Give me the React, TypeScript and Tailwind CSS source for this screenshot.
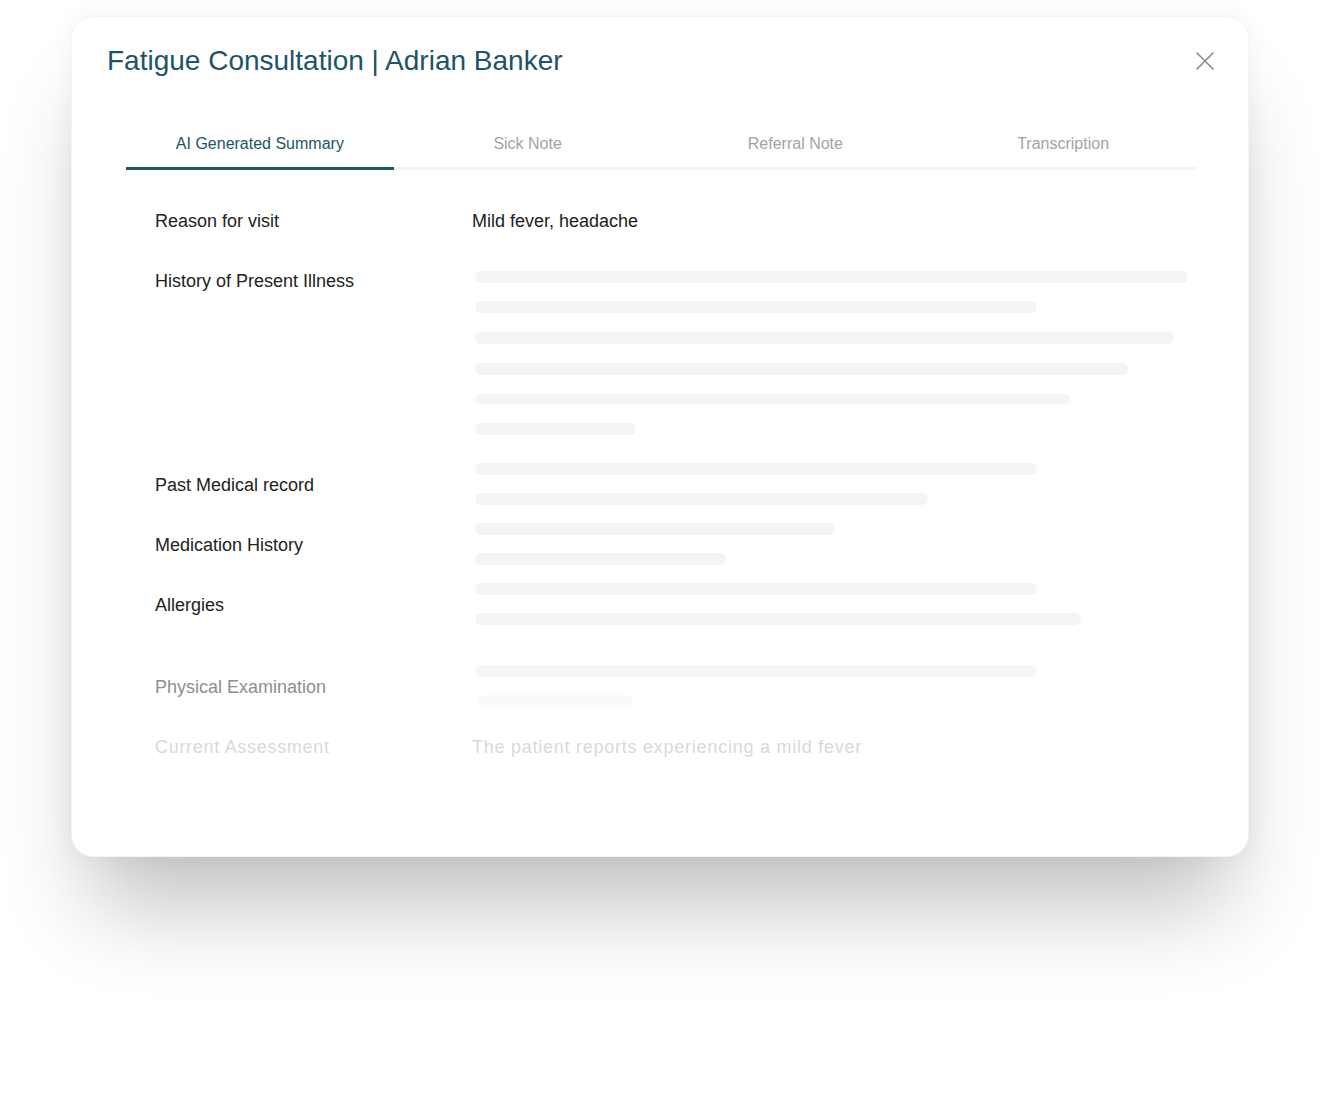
import React from "react";

const tabs = ["AI Generated Summary", "Sick Note", "Referral Note", "Transcription"];

export default function App() {
  return (
    <div className="min-h-[1108px] bg-white pt-[16px] pl-[71px] font-['Liberation_Sans',Arial,sans-serif]">
      <div className="w-[1178px] h-[841px] rounded-[22px] bg-white border border-[#f4f4f4] shadow-[0_0_24px_rgba(0,0,0,0.05),0_70px_90px_-20px_rgba(0,0,0,0.24)]">
        <div className="flex items-center justify-between pt-[27px] pl-[35px] pr-[31px]">
          <h1 className="text-[28px] leading-[34px] text-[#1d5467] font-normal">
            Fatigue Consultation | Adrian Banker
          </h1>
          <button className="w-6 h-6 flex items-center justify-center" aria-label="Close">
            <svg width="18" height="18" viewBox="0 0 18 18" fill="none">
              <path d="M1 1L17 17M17 1L1 17" stroke="#8c8c8c" strokeWidth="1.7" strokeLinecap="round" />
            </svg>
          </button>
        </div>

        <div className="mt-[54px] ml-[54px] w-[1071px] flex">
          {tabs.map((t, i) => (
            <div
              key={t}
              className={
                i === 0
                  ? "flex-1 text-center pb-[11px] text-[16px] leading-6 text-[#1d5467] border-b-[3px] border-[#1f5a6b]"
                  : "flex-1 text-center pb-[11px] text-[16px] leading-6 text-[#a3a3a3] border-b-[3px] border-[#f3f5f5]"
              }
            >
              {t}
            </div>
          ))}
        </div>

        <div className="flex mt-[37px] pl-[83px]">
          <div className="w-[317px] flex flex-col text-[18px] leading-7 text-[#222222]">
            <div>Reason for visit</div>
            <div className="mt-8">History of Present Illness</div>
            <div className="mt-[176px]">Past Medical record</div>
            <div className="mt-8">Medication History</div>
            <div className="mt-8">Allergies</div>
            <div className="mt-[54px] text-[#8e8e8e]">Physical Examination</div>
            <div className="mt-8 text-[#d9d9d9] tracking-[0.7px]">Current Assessment</div>
          </div>
          <div className="flex-1 flex flex-col text-[18px] leading-7">
            <div className="text-[#1c1c1c]">Mild fever, headache</div>
            <div className="pl-[3px] flex flex-col">
              <div className="mt-[36px] h-[12px] w-[713px] rounded-full bg-[#f4f4f4]" />
              <div className="mt-[18px] h-[12px] w-[562px] rounded-full bg-[#f4f4f4]" />
              <div className="mt-[19px] h-[12px] w-[699px] rounded-full bg-[#f4f4f4]" />
              <div className="mt-[19px] h-[12px] w-[653px] rounded-full bg-[#f4f4f4]" />
              <div className="mt-[19px] h-[10px] w-[595px] rounded-full bg-[#f5f5f5]" />
              <div className="mt-[19px] h-[12px] w-[161px] rounded-full bg-[#f4f4f4]" />
              <div className="mt-[28px] h-[12px] w-[562px] rounded-full bg-[#f4f4f4]" />
              <div className="mt-[18px] h-[12px] w-[453px] rounded-full bg-[#f4f4f4]" />
              <div className="mt-[18px] h-[12px] w-[360px] rounded-full bg-[#f4f4f4]" />
              <div className="mt-[18px] h-[12px] w-[251px] rounded-full bg-[#f4f4f4]" />
              <div className="mt-[18px] h-[12px] w-[562px] rounded-full bg-[#f4f4f4]" />
              <div className="mt-[18px] h-[12px] w-[606px] rounded-full bg-[#f4f4f4]" />
              <div className="mt-[40px] h-[12px] w-[562px] rounded-full bg-[#f6f6f6]" />
              <div className="mt-[18px] ml-[3px] h-[12px] w-[155px] rounded-full bg-[#fafafa]" />
            </div>
            <div className="mt-[26px] text-[#d9d9d9] tracking-[0.75px]">The patient reports experiencing a mild fever</div>
          </div>
        </div>
      </div>
    </div>
  );
}
